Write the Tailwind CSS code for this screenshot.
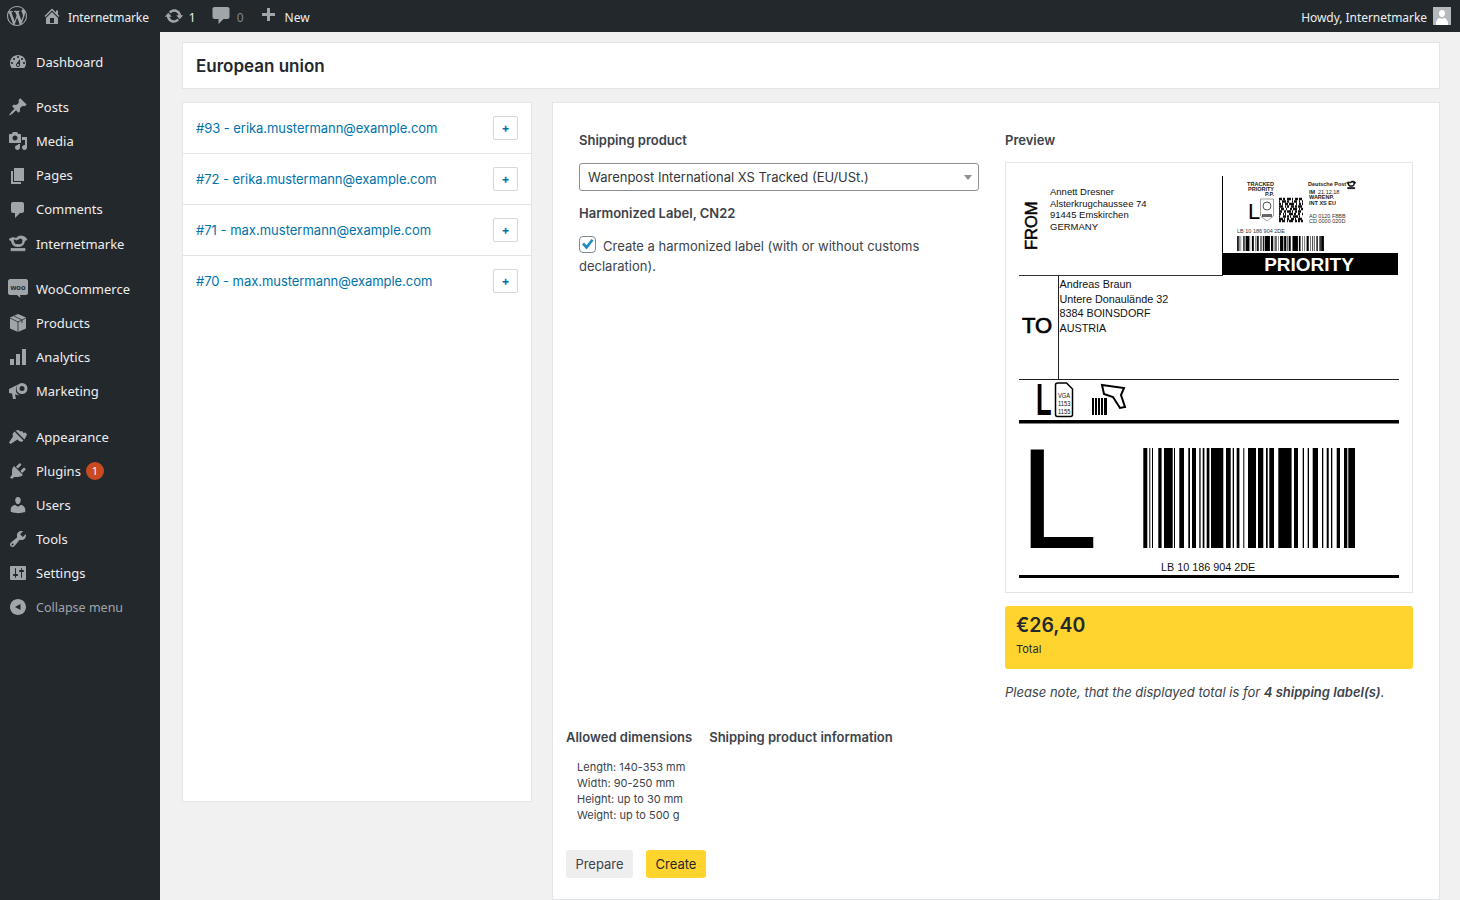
<!DOCTYPE html>
<html lang="en">
  <head>
    <meta charset="UTF-8" />
    <meta name="viewport" content="width=device-width, initial-scale=1.0" />
    <title>European union</title>
    <script src="https://cdn.jsdelivr.net/npm/@tailwindcss/browser@4"></script>
  </head>
  <body class="bg-[#f1f1f1] font-['Inter',sans-serif] text-[13px] text-[#3c434a] h-[900px] overflow-hidden">
    <!-- Admin bar -->
    <header class="h-8 bg-[#23282d] text-[#eeeeee] font-['Noto_Sans',sans-serif] text-[12px] flex items-center justify-between pr-[9px]">
      <div class="flex items-center">
        <svg class="w-5 h-5 ml-[7px] fill-[#a0a5aa]" viewBox="0 0 20 20"><path d="M20 10c0-5.51-4.49-10-10-10C4.48 0 0 4.49 0 10c0 5.52 4.48 10 10 10 5.51 0 10-4.48 10-10zM7.78 15.37L4.37 6.22c.55-.02 1.17-.08 1.17-.08.5-.06.44-1.13-.06-1.11 0 0-1.45.11-2.37.11-.18 0-.37 0-.58-.01C4.12 2.69 6.87 1.11 10 1.11c2.33 0 4.45.87 6.05 2.34-.68-.11-1.65.39-1.65 1.58 0 .74.45 1.36.9 2.1.35.61.55 1.36.55 2.46 0 1.49-1.4 5-1.4 5l-3.03-8.37c.54-.02.82-.17.82-.17.5-.05.44-1.25-.06-1.22 0 0-1.44.12-2.38.12-.87 0-2.33-.12-2.33-.12-.5-.03-.56 1.2-.06 1.22l.92.08 1.26 3.41zM17.41 10c.24-.64.74-1.87.43-4.25.7 1.29 1.05 2.71 1.05 4.25 0 3.29-1.73 6.24-4.4 7.78.97-2.59 1.94-5.2 2.92-7.78zM6.1 18.09C3.12 16.65 1.11 13.53 1.11 10c0-1.3.23-2.48.72-3.59C3.25 10.3 4.67 14.2 6.1 18.09zm4.03-6.63l2.58 6.98c-.86.29-1.76.45-2.71.45-.79 0-1.57-.11-2.29-.33.81-2.38 1.62-4.74 2.42-7.1z"/></svg>
        <svg class="w-5 h-5 ml-[15px] fill-[#a0a5aa]" viewBox="0 0 20 20"><path d="M16 8.5l1.53 1.53-1.06 1.06L10 4.62l-6.47 6.47-1.06-1.06L10 2.5l4 4v-2h2v4zm-6-2.46l6 5.99V18H4v-5.97zM12 17v-5H8v5h4z"/></svg>
        <span class="ml-[6px] mt-[3px] tracking-[-0.1px]">Internetmarke</span>
        <svg class="w-5 h-5 ml-[15px] fill-[#a0a5aa]" viewBox="0 0 20 20"><path d="M10.2 3.28c3.53 0 6.43 2.61 6.92 6h2.08l-3.5 4-3.5-4h2.32c-.45-1.97-2.21-3.45-4.32-3.45-1.45 0-2.73.71-3.54 1.78L4.95 5.66C6.23 4.2 8.11 3.28 10.2 3.28zm-.4 13.44c-3.52 0-6.43-2.61-6.92-6H.8l3.5-4c1.17 1.33 2.33 2.67 3.5 4H5.48c.45 1.97 2.21 3.45 4.32 3.45 1.45 0 2.73-.71 3.54-1.78l1.71 1.95c-1.28 1.46-3.15 2.38-5.25 2.38z"/></svg>
        <span class="ml-[5px] mt-[3px]">1</span>
        <svg class="w-5 h-5 ml-[15px] fill-[#a0a5aa]" viewBox="0 0 20 20"><path d="M3.500 1h13c1.100 0 2 .9 2 2v8c0 1.100-.9 2-2 2h-4l-5 5v-5h-4c-1.100 0-2-.9-2-2V3c0-1.100.9-2 2-2z"/></svg>
        <span class="ml-[6px] mt-[3px] text-[#7e8993]">0</span>
        <svg class="w-5 h-5 ml-[14px] fill-[#a0a5aa]" viewBox="0 0 20 20"><path d="M17 7v3h-5v5H9v-5H4V7h5V2h3v5h5z"/></svg>
        <span class="ml-[7px] mt-[3px]">New</span>
      </div>
      <div class="flex items-center">
        <span class="mt-[3px] tracking-[-0.05px]">Howdy, Internetmarke</span>
        <div class="ml-[6px] w-[18px] h-[18px] bg-[#b4b9be] flex items-end justify-center overflow-hidden">
          <svg class="w-[18px] h-[18px] fill-white" viewBox="0 0 18 18"><path d="M9 3c2 0 3 1.5 3 3.4S10.800 10 9 10 6 8.300 6 6.400 7 3 9 3zM3 16.500c0-3.500 2.500-5.500 4-5.500l2 1 2-1c1.500 0 4 2 4 5.500V18H3z"/></svg>
        </div>
      </div>
    </header>

    <div class="flex h-[868px]">
      <!-- Sidebar -->
      <nav class="w-40 shrink-0 bg-[#23282d] text-[#eeeeee] font-['Noto_Sans',sans-serif] text-[13px] pt-[13px]">
        <a class="flex items-center h-[34px] pl-[8px]">
          <svg class="w-5 h-5 fill-[#a0a5aa]" viewBox="0 0 20 20"><path d="M3.760 16h12.480c1.100-1.370 1.760-3.110 1.760-5 0-4.420-3.580-8-8-8s-8 3.580-8 8c0 1.890.66 3.630 1.760 5zM10 4c.55 0 1 .45 1 1s-.45 1-1 1-1-.45-1-1 .45-1 1-1zM6 6c.55 0 1 .45 1 1s-.45 1-1 1-1-.45-1-1 .45-1 1-1zm8 0c.55 0 1 .45 1 1s-.45 1-1 1-1-.45-1-1 .45-1 1-1zm-5.370 5.550L12 7v6c0 1.100-.9 2-2 2s-2-.9-2-2c0-.57.24-1.080.63-1.450zM4 10c.55 0 1 .45 1 1s-.45 1-1 1-1-.45-1-1 .45-1 1-1zm12 0c.55 0 1 .45 1 1s-.45 1-1 1-1-.45-1-1 .45-1 1-1zm-5 3c0-.55-.45-1-1-1s-1 .45-1 1 .45 1 1 1 1-.45 1-1z" fill-rule="evenodd"/></svg>
          <span class="ml-[8px] mt-[2px]">Dashboard</span>
        </a>
        <div class="h-[11px]"></div>
        <a class="flex items-center h-[34.25px] pl-[8px]">
          <svg class="w-5 h-5 fill-[#a0a5aa]" viewBox="0 0 20 20"><path d="M10.440 3.020l1.820-1.820 6.360 6.350-1.830 1.820c-1.050-.68-2.480-.57-3.410.36l-.75.75c-.92.93-1.040 2.350-.35 3.410l-1.830 1.820-2.410-2.410-2.800 2.790c-.42.42-3.380 2.710-3.800 2.290s1.860-3.390 2.280-3.810l2.790-2.790L4.100 9.360l1.830-1.820c1.050.69 2.480.57 3.400-.36l.75-.75c.93-.92 1.050-2.350.36-3.410z"/></svg>
          <span class="ml-[8px] mt-[2px]">Posts</span>
        </a>
        <a class="flex items-center h-[34.25px] pl-[8px]">
          <svg class="w-5 h-5 fill-[#a0a5aa]" viewBox="0 0 20 20"><path d="M13 11V4c0-.55-.45-1-1-1h-1.670L9 1H5L3.670 3H2c-.55 0-1 .45-1 1v7c0 .55.45 1 1 1h10c.55 0 1-.45 1-1zM7 4.500c1.380 0 2.500 1.120 2.500 2.500S8.380 9.500 7 9.500 4.500 8.380 4.500 7 5.620 4.500 7 4.500zM14 6h5v10.500c0 1.380-1.120 2.500-2.500 2.500S14 17.880 14 16.500s1.120-2.500 2.500-2.500c.17 0 .34.02.5.05V9h-3V6zm-4 8.050V13h2v3.500c0 1.380-1.120 2.500-2.500 2.500S7 17.880 7 16.500 8.120 14 9.500 14c.17 0 .34.02.5.05z"/></svg>
          <span class="ml-[8px]">Media</span>
        </a>
        <a class="flex items-center h-[34.25px] pl-[8px]">
          <svg class="w-5 h-5 fill-[#a0a5aa]" viewBox="0 0 20 20"><path d="M6 15V2h10v13H6zm-1 1h8v2H3V5h2v11z"/></svg>
          <span class="ml-[8px]">Pages</span>
        </a>
        <a class="flex items-center h-[34.25px] pl-[8px]">
          <svg class="w-5 h-5 fill-[#a0a5aa]" viewBox="0 0 20 20"><path d="M5 2h9c1.100 0 2 .9 2 2v7c0 1.100-.9 2-2 2h-2l-5 5v-5H5c-1.100 0-2-.9-2-2V4c0-1.100.9-2 2-2z"/></svg>
          <span class="ml-[8px]">Comments</span>
        </a>
        <a class="flex items-center h-[34.25px] pl-[8px]">
          <svg class="w-5 h-5 fill-[#a0a5aa] stroke-[#a0a5aa]" stroke-width=".8" viewBox="0 0 20 20"><path d="M1 5.500C3 3.500 6 3 8 4.500c1-1.500 3-2.500 5-2.500 2.500 0 5 1.500 6 3.500l-2.500 1.500-.5 2c-.5 2-2.500 3.500-5 3.500H9C6.500 12.500 4.500 11 4 9L3.500 7zM8.500 6C7.500 5 6 5 5 5.500l1 3c.5 1.500 1.500 2 3 2h2.500c1.500 0 2.500-.5 3-2l.5-2.500C14 4.500 12.500 4 11.500 4.500c-1 .3-2 1-3 1.500zM3 14.500h14v2.200H3z" fill-rule="evenodd"/></svg>
          <span class="ml-[8px] mt-[2px] tracking-[-0.05px]">Internetmarke</span>
        </a>
        <div class="h-[11px]"></div>
        <a class="flex items-center h-[34px] pl-[8px]">
          <svg class="w-5 h-5" viewBox="0 0 20 20"><path class="fill-[#a0a5aa]" d="M2 0h16c1 0 2 1 2 2v12c0 1-1 2-2 2h-6l.5 3-3.500-3H2c-1 0-2-1-2-2V2c0-1 1-2 2-2z"/><text x="10" y="10.500" text-anchor="middle" class="fill-[#23282d] font-['Liberation_Sans',sans-serif] text-[7.500px] font-bold">woo</text></svg>
          <span class="ml-[8px]">WooCommerce</span>
        </a>
        <a class="flex items-center h-[34px] pl-[8px]">
          <svg class="w-5 h-5 fill-[#a0a5aa]" viewBox="0 0 20 20"><path d="M10 1l8 3.500v11L10 19l-8-3.500v-11z"/><path class="fill-none stroke-[#23282d]" d="M2 5l8 4 8-4M10 9v10M6 3l8 4v3" stroke-width=".8"/></svg>
          <span class="ml-[8px]">Products</span>
        </a>
        <a class="flex items-center h-[34px] pl-[8px]">
          <svg class="w-5 h-5 fill-[#a0a5aa]" viewBox="0 0 20 20"><path d="M18 18V2h-4v16h4zm-6 0V7H8v11h4zm-6 0v-6H2v6h4z"/></svg>
          <span class="ml-[8px]">Analytics</span>
        </a>
        <a class="flex items-center h-[34px] pl-[8px]">
          <svg class="w-5 h-5 fill-[#a0a5aa]" viewBox="0 0 20 20"><path fill-rule="evenodd" d="M1 8v4l3 .6 1 5.400h3l-1-4.600 5 1.200A6.500 6.500 0 0 1 12 2.500zM14 2a5.500 5.500 0 1 0 0 11 5.500 5.500 0 0 0 0-11zm0 3a2.500 2.500 0 1 1 0 5 2.500 2.500 0 0 1 0-5z"/></svg>
          <span class="ml-[8px]">Marketing</span>
        </a>
        <div class="h-[12px]"></div>
        <a class="flex items-center h-[34px] pl-[8px]">
          <svg class="w-5 h-5 fill-[#a0a5aa]" viewBox="0 0 20 20"><path d="M7.500 3.500l9 9 2.500-5-1.500-2-2 .5-1.500-2-2 .5-1-1.500zM6.500 4.500l9 9-2 1.500-2.500-1-1.500-1.500L2.500 17l-1.500-1.500L5 9.500 4.500 7z"/></svg>
          <span class="ml-[8px]">Appearance</span>
        </a>
        <a class="flex items-center h-[34px] pl-[8px]">
          <svg class="w-5 h-5 fill-[#a0a5aa]" viewBox="0 0 20 20"><path d="M13.110 4.360L9.870 7.600 8 5.730l3.240-3.240c.35-.34 1.050-.2 1.560.32.52.51.66 1.210.31 1.550zm-8 1.770l.91-1.120 9.010 9.010-1.190.84c-.71.71-2.630 1.160-3.820 1.160H6.140L4.900 17.260c-.59.59-1.540.59-2.120 0-.59-.58-.59-1.530 0-2.120l1.240-1.240v-3.880c0-1.130.4-3.190 1.090-3.890zm7.260 3.970l3.240-3.240c.34-.35 1.040-.21 1.550.31.52.51.66 1.210.31 1.550l-3.240 3.250z"/></svg>
          <span class="ml-[8px]">Plugins</span>
          <span class="ml-[5px] w-[18px] h-[18px] rounded-full bg-[#ca4a1f] text-white text-[11px] flex items-center justify-center">1</span>
        </a>
        <a class="flex items-center h-[34px] pl-[8px]">
          <svg class="w-5 h-5 fill-[#a0a5aa]" viewBox="0 0 20 20"><path d="M10 9.250c-2.270 0-2.730-3.440-2.730-3.440C7 4.020 7.820 2 9.970 2c2.160 0 2.980 2.020 2.710 3.810 0 0-.41 3.440-2.680 3.440zm0 2.570L12.720 10c2.390 0 4.520 2.330 4.520 4.530v2.490s-3.650 1.130-7.240 1.130c-3.650 0-7.240-1.130-7.240-1.130v-2.490c0-2.250 1.940-4.480 4.470-4.480z"/></svg>
          <span class="ml-[8px]">Users</span>
        </a>
        <a class="flex items-center h-[34px] pl-[8px]">
          <svg class="w-5 h-5 fill-[#a0a5aa]" viewBox="0 0 20 20"><path d="M16.680 9.770c-1.340 1.340-3.300 1.670-4.950.99l-5.410 6.520c-.99.99-2.590.99-3.580 0s-.99-2.590 0-3.570l6.520-5.420c-.68-1.650-.35-3.610.99-4.950 1.280-1.280 3.120-1.620 4.720-1.060l-2.890 2.890 2.820 2.820 2.860-2.870c.53 1.580.18 3.390-1.080 4.650zM3.810 16.210c.4.39 1.040.39 1.430 0 .4-.4.4-1.040 0-1.430-.39-.4-1.030-.4-1.430 0-.39.39-.39 1.030 0 1.430z"/></svg>
          <span class="ml-[8px]">Tools</span>
        </a>
        <a class="flex items-center h-[34px] pl-[8px]">
          <svg class="w-5 h-5 fill-[#a0a5aa]" viewBox="0 0 20 20"><path fill-rule="evenodd" d="M2 4c0-.55.45-1 1-1h14c.55 0 1 .45 1 1v12c0 .55-.45 1-1 1H3c-.55 0-1-.45-1-1zM7 5.500V11H6c-.55 0-1 .45-1 1s.45 1 1 1h1v1.500c0 .28.22.5.5.5s.5-.22.5-.5V13h1c.55 0 1-.45 1-1s-.45-1-1-1H8V5.500c0-.28-.22-.5-.5-.5s-.5.22-.5.5zM13 5.500V7h-1c-.55 0-1 .45-1 1s.45 1 1 1h1v5.500c0 .28.22.5.5.5s.5-.22.5-.5V9h1c.55 0 1-.45 1-1s-.45-1-1-1h-1V5.500c0-.28-.22-.5-.5-.5s-.5.22-.5.5z"/></svg>
          <span class="ml-[8px]">Settings</span>
        </a>
        <a class="flex items-center h-[34px] pl-[8px] text-[#a0a5aa] text-[12.500px]">
          <svg class="w-5 h-5 fill-[#a0a5aa]" viewBox="0 0 20 20"><path fill-rule="evenodd" d="M18 10c0-4.420-3.580-8-8-8s-8 3.580-8 8 3.580 8 8 8 8-3.580 8-8zm-5.500-3v6L7 10l5.500-3z"/></svg>
          <span class="ml-[8px] mt-[2px]">Collapse menu</span>
        </a>
      </nav>

      <!-- Content -->
      <main class="flex-1 pl-[22px] pr-5 pt-[10px]">
        <div class="h-[47px] bg-white border border-[#e2e4e7] flex items-center pl-[13px]">
          <h1 class="text-[17px] font-semibold text-[#23282d] mt-[2px]">European union</h1>
        </div>

        <div class="flex gap-5 mt-[13px]">
          <!-- Order list -->
          <div class="w-[350px] h-[700px] shrink-0 bg-white border border-[#e2e4e7] text-[#0073aa] text-[13px]">
            <div class="h-[51px] border-b border-[#e2e4e7] flex items-center justify-between px-[13px]">
              <span class="mt-[2px] tracking-[-0.05px]">#93 - erika.mustermann@example.com</span>
              <button class="w-[25px] h-[24px] border border-[#d5d8dc] rounded-[2px] bg-white flex items-center justify-center font-bold text-[12px] text-[#0073aa]">+</button>
            </div>
            <div class="h-[51px] border-b border-[#e2e4e7] flex items-center justify-between px-[13px]">
              <span class="mt-[2px] tracking-[-0.05px]">#72 - erika.mustermann@example.com</span>
              <button class="w-[25px] h-[24px] border border-[#d5d8dc] rounded-[2px] bg-white flex items-center justify-center font-bold text-[12px] text-[#0073aa]">+</button>
            </div>
            <div class="h-[51px] border-b border-[#e2e4e7] flex items-center justify-between px-[13px]">
              <span class="mt-[2px]">#71 - max.mustermann@example.com</span>
              <button class="w-[25px] h-[24px] border border-[#d5d8dc] rounded-[2px] bg-white flex items-center justify-center font-bold text-[12px] text-[#0073aa]">+</button>
            </div>
            <div class="h-[51px] border-b border-transparent flex items-center justify-between px-[13px]">
              <span class="mt-[2px] tracking-[-0.05px]">#70 - max.mustermann@example.com</span>
              <button class="w-[25px] h-[24px] border border-[#d5d8dc] rounded-[2px] bg-white flex items-center justify-center font-bold text-[12px] text-[#0073aa]">+</button>
            </div>
          </div>

          <!-- Detail panel -->
          <div class="flex-1 h-[798px] bg-white border border-[#e2e4e7]">
            <div class="h-[617px] px-[26px] pt-[28px] flex gap-[26px]">
              <div class="w-[400px] shrink-0">
                <h2 class="font-semibold leading-[18px]">Shipping product</h2>
                <div class="mt-[14px] h-[28px] border border-[#8c8f94] rounded-[3px] flex items-center justify-between pl-[8px] pr-[6px] text-[#32373c]">
                  <span class="mt-[2px]">Warenpost International XS Tracked (EU/USt.)</span>
                  <svg class="w-[8px] h-[5px] fill-[#8c8f94]" viewBox="0 0 8 5"><path d="M0 0h8L4 5z"/></svg>
                </div>
                <h2 class="font-semibold leading-[18px] mt-[13px]">Harmonized Label, CN22</h2>
                <p class="mt-[14px] leading-[20px]">
                  <span class="inline-flex align-[-1px] w-[17px] h-[17px] border border-[#7e8993] rounded-[4px] items-center justify-center mr-[7px]">
                    <svg class="w-[15px] h-[15px] fill-[#1e8cbe]" viewBox="0 0 15 15"><path d="M2 7.500l2-2 2.500 2.700L11.500 2l2 1.600-6.800 8.900z"/></svg>
                  </span>Create a harmonized label (with or without customs declaration).
                </p>
              </div>
              <div class="w-[408px] shrink-0">
                <h2 class="font-semibold leading-[18px]">Preview</h2>
                <div class="mt-[13px] h-[431px] border border-[#e2e4e7]">
                  <svg class="block w-[406px] h-[429px]" viewBox="1006 163 406 429">
                    <defs>
                      <path id="bars" d="M1143.3 448h4v100h-4zM1149.300 448h1v100h-1zM1152 448h1v100h-1zM1158.300 448h3.300v100h-3.300zM1164 448h8.700v100h-8.700zM1174 448h1v100h-1zM1179.300 448h4.700v100h-4.700zM1188.300 448h1.700v100h-1.700zM1192 448h4v100h-4zM1199.300 448h1.300v100h-1.300zM1202.700 448h1.700v100h-1.700zM1206.700 448h2.700v100h-2.700zM1211 448h12.300v100h-12.300zM1226 448h4.700v100h-4.700zM1232.700 448h1.300v100h-1.300zM1236.700 448h2.700v100h-2.700zM1243.300 448h1v100h-1zM1248 448h8v100h-8zM1258 448h5.300v100h-5.300zM1266 448h1.700v100h-1.700zM1269.300 448h4.700v100h-4.700zM1278.300 448h13.300v100h-13.300zM1294 448h4v100h-4zM1302.700 448h1.300v100h-1.300zM1307.700 448h1.300v100h-1.300zM1312.700 448h5.300v100h-5.300zM1322 448h1.300v100h-1.300zM1326.700 448h2v100h-2zM1331 448h1.300v100h-1.300zM1336.700 448h3.300v100h-3.300zM1344 448h3.300v100h-3.300zM1348.300 448h6.700v100h-6.700z"/>
                    </defs>
                    <g class="font-['Liberation_Sans',sans-serif] fill-black">
                      <!-- sender -->
                      <text x="1037" y="250" transform="rotate(-90 1037 250)" class="text-[16.500px]" stroke="#000" stroke-width=".5">FROM</text>
                      <g class="text-[9.500px] fill-[#111]">
                        <text x="1050" y="195">Annett Dresner</text>
                        <text x="1050" y="207">Alsterkrugchaussee 74</text>
                        <text x="1050" y="218">91445 Emskirchen</text>
                        <text x="1050" y="230">GERMANY</text>
                      </g>
                      <!-- franking block -->
                      <path d="M1222 176h1v100h-1z"/>
                      <path d="M1222 253h176v22h-176z"/>
                      <text x="1309" y="271" text-anchor="middle" class="fill-white text-[19px] font-bold">PRIORITY</text>
                      <g class="text-[5.500px] font-bold fill-[#222]">
                        <text x="1274" y="186" text-anchor="end">TRACKED</text>
                        <text x="1274" y="191" text-anchor="end">PRIORITY</text>
                        <text x="1274" y="196" text-anchor="end">P.P.</text>
                        <text x="1308" y="186">Deutsche Post</text>
                        <text x="1309" y="194">IM</text>
                        <text x="1318" y="194" font-weight="400">21.12.18</text>
                        <text x="1309" y="199">WARENP.</text>
                        <text x="1309" y="205">INT XS EU</text>
                      </g>
                      <g class="text-[5.500px] fill-[#333]">
                        <text x="1309" y="218">AD  0120  F8BB</text>
                        <text x="1309" y="223">CD  0000  020D</text>
                        <text x="1237" y="233">LB 10 186 904 2DE</text>
                      </g>
                      <!-- post horn -->
                      <path transform="translate(1346 180) scale(.52)" stroke="#000" stroke-width="1" d="M1 5.500C3 3.500 6 3 8 4.500c1-1.500 3-2.500 5-2.500 2.500 0 5 1.500 6 3.500l-2.500 1.500-.5 2c-.5 2-2.500 3.500-5 3.500H9C6.500 12.500 4.500 11 4 9L3.500 7zM8.500 6C7.500 5 6 5 5 5.500l1 3c.5 1.500 1.500 2 3 2h2.500c1.500 0 2.500-.5 3-2l.5-2.500C14 4.500 12.500 4 11.500 4.500c-1 .3-2 1-3 1.500zM3 14.500h14v2.200H3z" fill-rule="evenodd"/>
                      <text x="1248" y="219" class="text-[22px]">L</text>
                      <path class="fill-none stroke-[#777]" stroke-width=".7" d="M1260.500 199h13v17l-6.500 5-6.500-5z"/>
                      <circle cx="1267" cy="206" r="4" class="fill-none stroke-[#555]" stroke-width="1"/>
                      <path d="M1262 214h10v3h-10z" class="fill-[#666]"/>
                      <!-- matrix code -->
                      <g class="fill-none stroke-[#111]" stroke-width="2.600">
                        <path d="M1279 199h24" stroke-dasharray="3 1 2 2 4 1 1 2 3 1"/>
                        <path d="M1279 201.500h24" stroke-dasharray="1 2 4 1 2 3 1 1 3 2"/>
                        <path d="M1279 204h24" stroke-dasharray="2 1 1 2 3 1 5 2 1 2"/>
                        <path d="M1279 206.500h24" stroke-dasharray="4 2 1 1 2 2 3 1 2 1"/>
                        <path d="M1279 209h24" stroke-dasharray="1 1 3 2 1 3 2 1 4 2"/>
                        <path d="M1279 211.500h24" stroke-dasharray="3 2 2 1 4 1 1 2 2 1"/>
                        <path d="M1279 214h24" stroke-dasharray="2 2 1 1 1 3 4 1 2 2"/>
                        <path d="M1279 216.500h24" stroke-dasharray="1 3 3 1 2 1 1 2 5 1"/>
                        <path d="M1279 219h24" stroke-dasharray="4 1 1 2 2 2 3 1 1 2"/>
                        <path d="M1279 221h24" stroke-dasharray="2 1 3 2 1 1 4 2 2 1"/>
                      </g>
                      <use href="#bars" transform="translate(1237 236) scale(.41 .15) translate(-1143 -448)"/>
                      <!-- recipient -->
                      <path d="M1019 275h204v1h-204z" class="fill-[#333]"/>
                      <path d="M1058 276h1v103h-1z" class="fill-[#222]"/>
                      <text x="1022" y="333" class="text-[22px]" stroke="#000" stroke-width=".7">TO</text>
                      <g class="text-[10.800px] fill-[#111]">
                        <text x="1059.500" y="288">Andreas Braun</text>
                        <text x="1059.500" y="303">Untere Donaulände 32</text>
                        <text x="1059.500" y="317">8384 BOINSDORF</text>
                        <text x="1059.500" y="332">AUSTRIA</text>
                      </g>
                      <path d="M1019 379h380v1h-380z" class="fill-[#222]"/>
                      <!-- service marks -->
                      <text transform="translate(1036 414.500) scale(.58 1)" class="text-[44px] font-bold">L</text>
                      <path class="fill-none stroke-black" stroke-width="1.500" d="M1057.500 383h9l6 6v25.500a2 2 0 0 1-2 2h-13a2 2 0 0 1-2-2v-29.500a2 2 0 0 1 2-2z"/>
                      <g class="text-[8px] fill-[#111]">
                        <text transform="translate(1058 398) scale(.72 1)">VGA</text>
                        <text transform="translate(1058 406) scale(.72 1)">1153</text>
                        <text transform="translate(1058 414) scale(.72 1)">1155</text>
                      </g>
                      <path d="M1092 398h2v17h-2zM1095 398h2v17h-2zM1098 398h2v17h-2zM1101 398h2v17h-2zM1104 398h3v17h-3z"/>
                      <path class="fill-white stroke-black" stroke-width="2" d="M1102 385l22 3-3 7 4 12-5 1-7-11-9-3z"/>
                      <path d="M1019 420h380v3.500h-380z"/>
                      <!-- routing code -->
                      <text x="1019" y="548" class="text-[142px]">L</text>
                      <use href="#bars"/>
                      <text x="1161" y="571" class="text-[10.800px] fill-[#111]">LB 10 186 904 2DE</text>
                      <path d="M1019 575h380v3h-380z"/>
                    </g>
                  </svg>
                </div>
                <div class="mt-[13px] h-[63px] rounded-[3px] bg-[#ffd42e] pl-[11px] pt-[6px] text-[#23282d]">
                  <p class="text-[19.500px] font-semibold leading-[26px]">€26,40</p>
                  <p class="text-[11px] leading-[14px] mt-[4px]">Total</p>
                </div>
                <p class="mt-[14px] italic leading-[18px]">Please note, that the displayed total is for <b class="font-semibold">4 shipping label(s)</b>.</p>
              </div>
            </div>

            <div class="pl-[13px]">
              <div class="flex gap-[17px] font-semibold leading-[18px] mt-[8px]">
                <span>Allowed dimensions</span>
                <span>Shipping product information</span>
              </div>
              <ul class="mt-[13px] pl-[11px] text-[11px] leading-[16px]">
                <li>Length: 140-353 mm</li>
                <li>Width: 90-250 mm</li>
                <li>Height: up to 30 mm</li>
                <li>Weight: up to 500 g</li>
              </ul>
              <div class="flex gap-[13px] mt-[27px]">
                <button class="h-[28px] w-[67px] rounded-[3px] bg-[#eeeeee] text-[#3c434a] pt-[2px]">Prepare</button>
                <button class="h-[28px] w-[60px] rounded-[3px] bg-[#ffd42e] text-[#23282d] pt-[2px]">Create</button>
              </div>
            </div>
          </div>
        </div>
      </main>
    </div>
  </body>
</html>
